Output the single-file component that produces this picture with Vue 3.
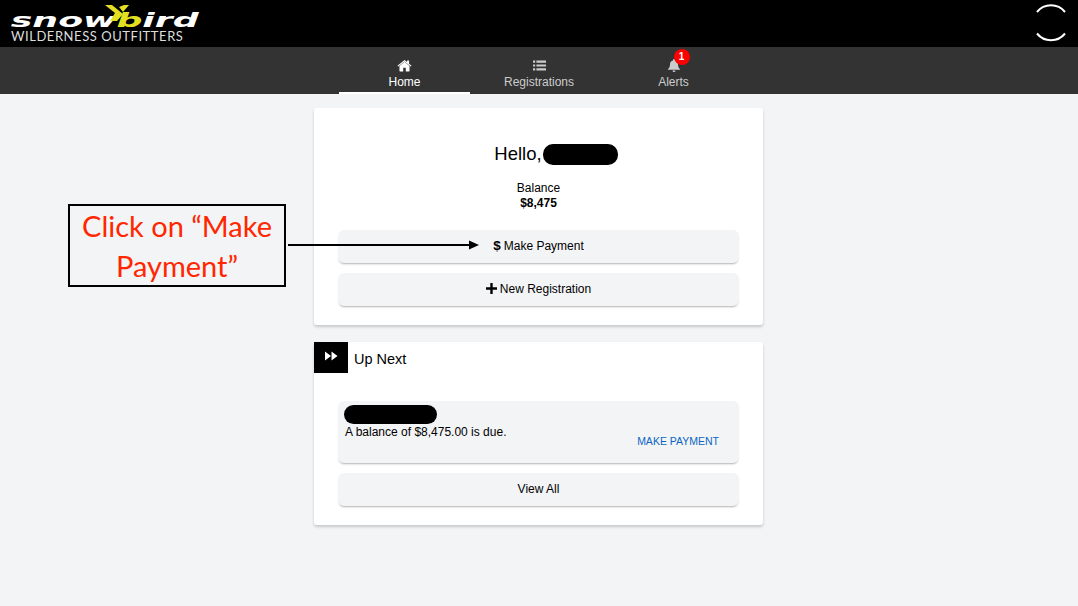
<template>
  <div class="page">
    <!-- Top bar with logo and spinner -->
    <header class="topbar">
      <div class="logo">
        <div class="logo-mark">
          <span class="logo-word">snow<span class="logo-b">b</span>ird</span>
          <svg class="logo-chevron" width="24" height="16" viewBox="0 0 24 16">
            <polygon points="0,0 7,0 18,9 12,16 5,16 10,8" fill="#e3e021" />
            <polygon points="14,2 19,0 24,0 18,7" fill="#e3e021" />
          </svg>
        </div>
        <div class="logo-sub">WILDERNESS OUTFITTERS</div>
      </div>
      <svg class="spinner" width="30" height="40" viewBox="0 0 30 40">
        <path d="M1 8 A18 18 0 0 1 29 8" />
        <path d="M1 29.500 A18 18 0 0 0 29 29.500" />
      </svg>
    </header>

    <!-- Tabs -->
    <nav class="tabs">
      <a v-for="tab in tabs" :key="tab.label" class="tab" :class="{ active: tab.active }">
        <span class="tab-icon">
          <svg v-if="tab.icon === 'home'" width="15" height="13" viewBox="0 0 14 12">
            <path d="M7 2.600 2.300 6.500V11a.5.5 0 0 0 .5.5h3V8.200h2.400v3.300h3a.5.5 0 0 0 .5-.5V6.500z" fill="#fff" />
            <path d="M.4 6.200 7 .8l2.400 2V1.400h1.900v3l2.300 1.800-.7.8L7 2.200 1.100 7z" fill="#fff" />
          </svg>
          <svg v-else-if="tab.icon === 'list'" width="13" height="11" viewBox="0 0 13 11">
            <path d="M0 .5h2.200v2.200H0zM3.400.5H13v2.200H3.400zM0 4.400h2.200v2.200H0zM3.400 4.400H13v2.200H3.400zM0 8.300h2.200v2.200H0zM3.400 8.300H13v2.200H3.400z" fill="#ccc" />
          </svg>
          <svg v-else width="12" height="13" viewBox="0 0 12 13">
            <path d="M6 0a1 1 0 0 1 1 1v.5A4 4 0 0 1 10 5.400c0 2.800 1.200 3.700 2 4.600v.8H0V10c.8-.9 2-1.800 2-4.600A4 4 0 0 1 5 1.500V1a1 1 0 0 1 1-1zM4.500 11.500h3a1.500 1.500 0 0 1-3 0z" fill="#ccc" />
          </svg>
          <span v-if="tab.badge" class="badge">{{ tab.badge }}</span>
        </span>
        <span class="tab-label">{{ tab.label }}</span>
      </a>
    </nav>

    <main class="content">
      <section class="card card-hello">
        <div class="hello">
          <span class="hello-text">Hello,</span>
          <span class="redacted redacted-name"></span>
        </div>
        <div class="balance">
          <div>Balance</div>
          <strong>$8,475</strong>
        </div>
        <div class="buttons">
          <button class="btn"><b class="btn-sign">$</b> Make Payment</button>
          <button class="btn">
            <svg width="11" height="11" viewBox="0 0 11 11"><path d="M4.300 0h2.400v4.300H11v2.400H6.700V11H4.300V6.700H0V4.300h4.300z" fill="#000" /></svg>
            New Registration
          </button>
        </div>
      </section>

      <section class="card card-next">
        <div class="next-head">
          <span class="next-icon">
            <svg width="13" height="10" viewBox="0 0 13 10"><path d="M0 0.500 6 5 0 9.500zM6.500 0.500 12.500 5 6.500 9.500z" fill="#fff" /></svg>
          </span>
          <h2>Up Next</h2>
        </div>
        <div class="buttons">
          <div class="due">
            <span class="redacted redacted-title"></span>
            <p>A balance of $8,475.00 is due.</p>
            <a class="due-link">MAKE PAYMENT</a>
          </div>
          <button class="btn">View All</button>
        </div>
      </section>
    </main>

    <!-- Tutorial callout lying over the page -->
    <div class="callout">Click on “Make Payment”</div>
    <svg class="arrow" width="192" height="12" viewBox="0 0 192 12">
      <path d="M0 6h181" stroke="#000" stroke-width="2" />
      <polygon points="181,1.500 191,6 181,10.500" fill="#000" />
    </svg>
  </div>
</template>

<script setup>
const tabs = [
  { label: 'Home', icon: 'home', active: true },
  { label: 'Registrations', icon: 'list' },
  { label: 'Alerts', icon: 'bell', badge: 1 },
]
</script>

<style>
html,
body {
  margin: 0;
  background: #f3f4f6;
}
</style>

<style scoped>
.page {
  position: relative;
  height: 606px;
  overflow: hidden;
  background: #f3f4f6;
  font-family: "Liberation Sans", Arial, sans-serif;
  color: #000;
}

.topbar {
  height: 47px;
  background: #000;
  display: flex;
  justify-content: space-between;
  align-items: center;
  padding: 0 9px;
}

.logo {
  width: 195px;
  margin-top: -2px;
  color: #fff;
}

.logo-mark {
  position: relative;
  height: 28px;
}

.logo-word {
  display: block;
  padding: 9px 0 0 1px;
  font-family: "DejaVu Sans", sans-serif;
  font-size: 20px;
  line-height: 19px;
  font-weight: 700;
  font-style: italic;
  white-space: nowrap;
  transform: scaleX(1.810);
  transform-origin: left;
}

.logo-b {
  color: #e3e021;
}

.logo-chevron {
  position: absolute;
  left: 96px;
  top: 3px;
}

.logo-sub {
  font-family: Lato, "Liberation Sans", sans-serif;
  font-size: 13px;
  line-height: 13px;
  letter-spacing: 0.550px;
  color: #ddd;
  padding-left: 2px;
  white-space: nowrap;
}

.spinner {
  margin-right: 3px;
  fill: none;
  stroke: #fff;
  stroke-width: 2;
}

.tabs {
  height: 47px;
  background: #333;
  display: flex;
  padding-left: 339px;
}

.tab {
  width: 131px;
  margin-right: 3.500px;
  display: flex;
  flex-direction: column;
  align-items: center;
  padding-top: 11px;
  box-sizing: border-box;
  color: #ccc;
  font-size: 12px;
  border-bottom: 2px solid transparent;
}

.tab.active {
  color: #fff;
  border-bottom-color: #fff;
}

.tab-icon {
  position: relative;
  height: 14px;
  display: flex;
  align-items: center;
}

.tab-label {
  margin-top: 3px;
  line-height: 15px;
}

.badge {
  position: absolute;
  left: 6px;
  top: -9px;
  width: 16px;
  height: 16px;
  border-radius: 50%;
  background: #f00;
  color: #fff;
  font-size: 10px;
  font-weight: 700;
  line-height: 16px;
  text-align: center;
}

.content {
  width: 449px;
  margin: 14px 0 0 314px;
  display: flex;
  flex-direction: column;
  gap: 17px;
}

.card {
  background: #fff;
  border-radius: 3px;
  box-shadow: 0 2px 3px rgba(0, 0, 0, 0.18);
  padding: 0 24px 19px;
}

.hello {
  display: flex;
  justify-content: center;
  align-items: center;
  gap: 1px;
  padding-top: 36px;
  height: 21px;
  font-size: 18.500px;
  margin-left: 35px;
}

.hello-text {
  margin-top: -2px;
}

.redacted {
  display: block;
  background: #000;
  border-radius: 10px;
}

.redacted-name {
  width: 75px;
  height: 21px;
}

.redacted-title {
  width: 93px;
  height: 19px;
}

.balance {
  margin-top: 16px;
  text-align: center;
  font-size: 12px;
  line-height: 15px;
}

.buttons {
  display: flex;
  flex-direction: column;
  gap: 10px;
  margin-top: 19px;
}

.btn {
  height: 33px;
  border: 0;
  border-radius: 6px;
  background: #f3f4f6;
  box-shadow: 0 2px 2px -1px rgba(0, 0, 0, 0.3);
  font-family: inherit;
  font-size: 12px;
  color: #000;
  display: flex;
  align-items: center;
  justify-content: center;
  gap: 3px;
  padding: 0 0 2px;
}

.btn-sign {
  font-size: 13.500px;
}

.next-head {
  display: flex;
  align-items: center;
  gap: 6px;
  margin-left: -24px;
  height: 31px;
}

.next-head h2 {
  margin: 2px 0 0;
  font-size: 14.500px;
  font-weight: 400;
}

.next-icon {
  width: 34px;
  height: 31px;
  background: #000;
  display: flex;
  align-items: center;
  justify-content: center;
  padding-bottom: 4px;
  box-sizing: border-box;
}

.card-next .buttons {
  margin-top: 28px;
}

.due {
  position: relative;
  height: 62px;
  background: #f3f4f6;
  border-radius: 6px;
  box-shadow: 0 2px 2px -1px rgba(0, 0, 0, 0.3);
  padding: 4px 6px 0;
  box-sizing: border-box;
  font-size: 12px;
}

.due p {
  margin: 1px 0 0;
  line-height: 15px;
  padding-left: 1px;
}

.due-link {
  position: absolute;
  right: 20px;
  top: 34px;
  font-size: 10.500px;
  line-height: 12px;
  color: #0a66c2;
}

.callout {
  position: absolute;
  left: 68px;
  top: 204px;
  width: 218px;
  height: 83px;
  box-sizing: border-box;
  border: 2px solid #000;
  background: #f3f4f6;
  color: #ff2600;
  font-family: Lato, "Liberation Sans", sans-serif;
  font-size: 29px;
  line-height: 40px;
  text-align: center;
}

.arrow {
  position: absolute;
  left: 288px;
  top: 239px;
}
</style>
